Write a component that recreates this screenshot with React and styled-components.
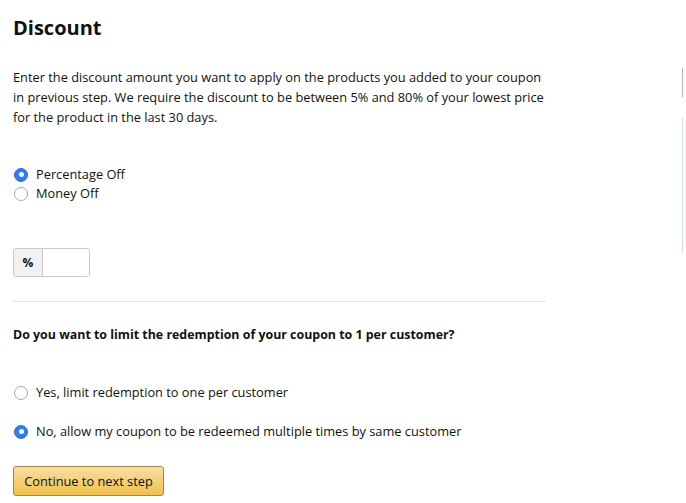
import React, { useState } from 'react';
import styled, { createGlobalStyle } from 'styled-components';

const GlobalStyle = createGlobalStyle`
  html, body {
    margin: 0;
    padding: 0;
    background: #fff;
  }
  body {
    font-family: "Open Sans", "Noto Sans", Arial, sans-serif;
    color: #111;
  }
`;

const Page = styled.div`
  display: flex;
  width: 686px;
  height: 503px;
  overflow: hidden;
`;

const Main = styled.div`
  flex: 1;
  padding: 14px 0 0 13px;
`;

const Rail = styled.div`
  width: 3px;
  display: flex;
  flex-direction: column;
  padding-top: 68px;
  margin-right: 1px;
`;

const RailBar = styled.div`
  width: 1px;
  height: ${({ h }) => h}px;
  margin-bottom: ${({ gap }) => gap || 0}px;
  background: ${({ color }) => color};
`;

const Title = styled.h1`
  margin: 0;
  font-size: 20px;
  font-weight: 700;
  line-height: 28px;
`;

const Description = styled.p`
  margin: 25px 0 0;
  width: 534px;
  font-size: 12.8px;
  line-height: 20px;
`;

const RadioGroup = styled.div`
  display: flex;
  flex-direction: column;
  gap: ${({ gap }) => gap}px;
  margin-top: ${({ top }) => top}px;
`;

const RadioRow = styled.label`
  display: flex;
  align-items: center;
  gap: 8px;
  font-size: 12.8px;
  line-height: 19px;
  cursor: pointer;
`;

const RadioDot = styled.span`
  width: 14px;
  height: 14px;
  margin-left: 1px;
  border-radius: 50%;
  box-sizing: border-box;
  display: inline-flex;
  align-items: center;
  justify-content: center;
  ${({ checked }) =>
    checked
      ? `background: #2f7bf5; border: 1px solid #2a6fde;`
      : `background: #fff; border: 1px solid #a9a9a9;`}

  &::after {
    content: '';
    width: 5px;
    height: 5px;
    border-radius: 50%;
    background: #fff;
    display: ${({ checked }) => (checked ? 'block' : 'none')};
  }
`;

const InputGroup = styled.div`
  display: flex;
  width: 77px;
  height: 29px;
  margin-top: 45px;
  border: 1px solid #c9c9c9;
  border-radius: 3px;
  box-sizing: border-box;
  overflow: hidden;
`;

const Addon = styled.span`
  width: 28px;
  display: flex;
  align-items: center;
  justify-content: center;
  background: #f1f1f1;
  border-right: 1px solid #c9c9c9;
  font-size: 12px;
  font-weight: 700;
`;

const Field = styled.input`
  flex: 1;
  min-width: 0;
  border: none;
  outline: none;
  padding: 0 6px;
  font: inherit;
`;

const Divider = styled.hr`
  width: 533px;
  margin: 24px 0 0;
  border: none;
  border-top: 1px solid #e3e3e3;
`;

const Question = styled.h2`
  margin: 23px 0 0;
  font-size: 12.4px;
  font-weight: 700;
  line-height: 20px;
`;

const Button = styled.button`
  margin-top: 25px;
  width: 151px;
  height: 30px;
  border: 1px solid #a88734;
  border-radius: 3px;
  background: linear-gradient(to bottom, #f7dfa5, #f0c14b);
  font-family: inherit;
  font-size: 12.8px;
  color: #111;
  cursor: pointer;
`;

function Radio({ checked, onSelect, children }) {
  return (
    <RadioRow onClick={onSelect}>
      <RadioDot checked={checked} />
      {children}
    </RadioRow>
  );
}

export default function App() {
  const [kind, setKind] = useState('percent');
  const [limit, setLimit] = useState('no');

  return (
    <Page>
      <GlobalStyle />
      <Main>
        <Title>Discount</Title>
        <Description>
          Enter the discount amount you want to apply on the products you added to your coupon
          in previous step. We require the discount to be between 5% and 80% of your lowest price
          for the product in the last 30 days.
        </Description>
        <RadioGroup gap={0} top={38}>
          <Radio checked={kind === 'percent'} onSelect={() => setKind('percent')}>
            Percentage Off
          </Radio>
          <Radio checked={kind === 'money'} onSelect={() => setKind('money')}>
            Money Off
          </Radio>
        </RadioGroup>
        <InputGroup>
          <Addon>{kind === 'percent' ? '%' : '$'}</Addon>
          <Field />
        </InputGroup>
        <Divider />
        <Question>Do you want to limit the redemption of your coupon to 1 per customer?</Question>
        <RadioGroup gap={20} top={38}>
          <Radio checked={limit === 'yes'} onSelect={() => setLimit('yes')}>
            Yes, limit redemption to one per customer
          </Radio>
          <Radio checked={limit === 'no'} onSelect={() => setLimit('no')}>
            No, allow my coupon to be redeemed multiple times by same customer
          </Radio>
        </RadioGroup>
        <Button>Continue to next step</Button>
      </Main>
      <Rail>
        <RailBar h={29} gap={21} color="#b5b5b5" />
        <RailBar h={135} color="#cfe0f3" />
      </Rail>
    </Page>
  );
}
